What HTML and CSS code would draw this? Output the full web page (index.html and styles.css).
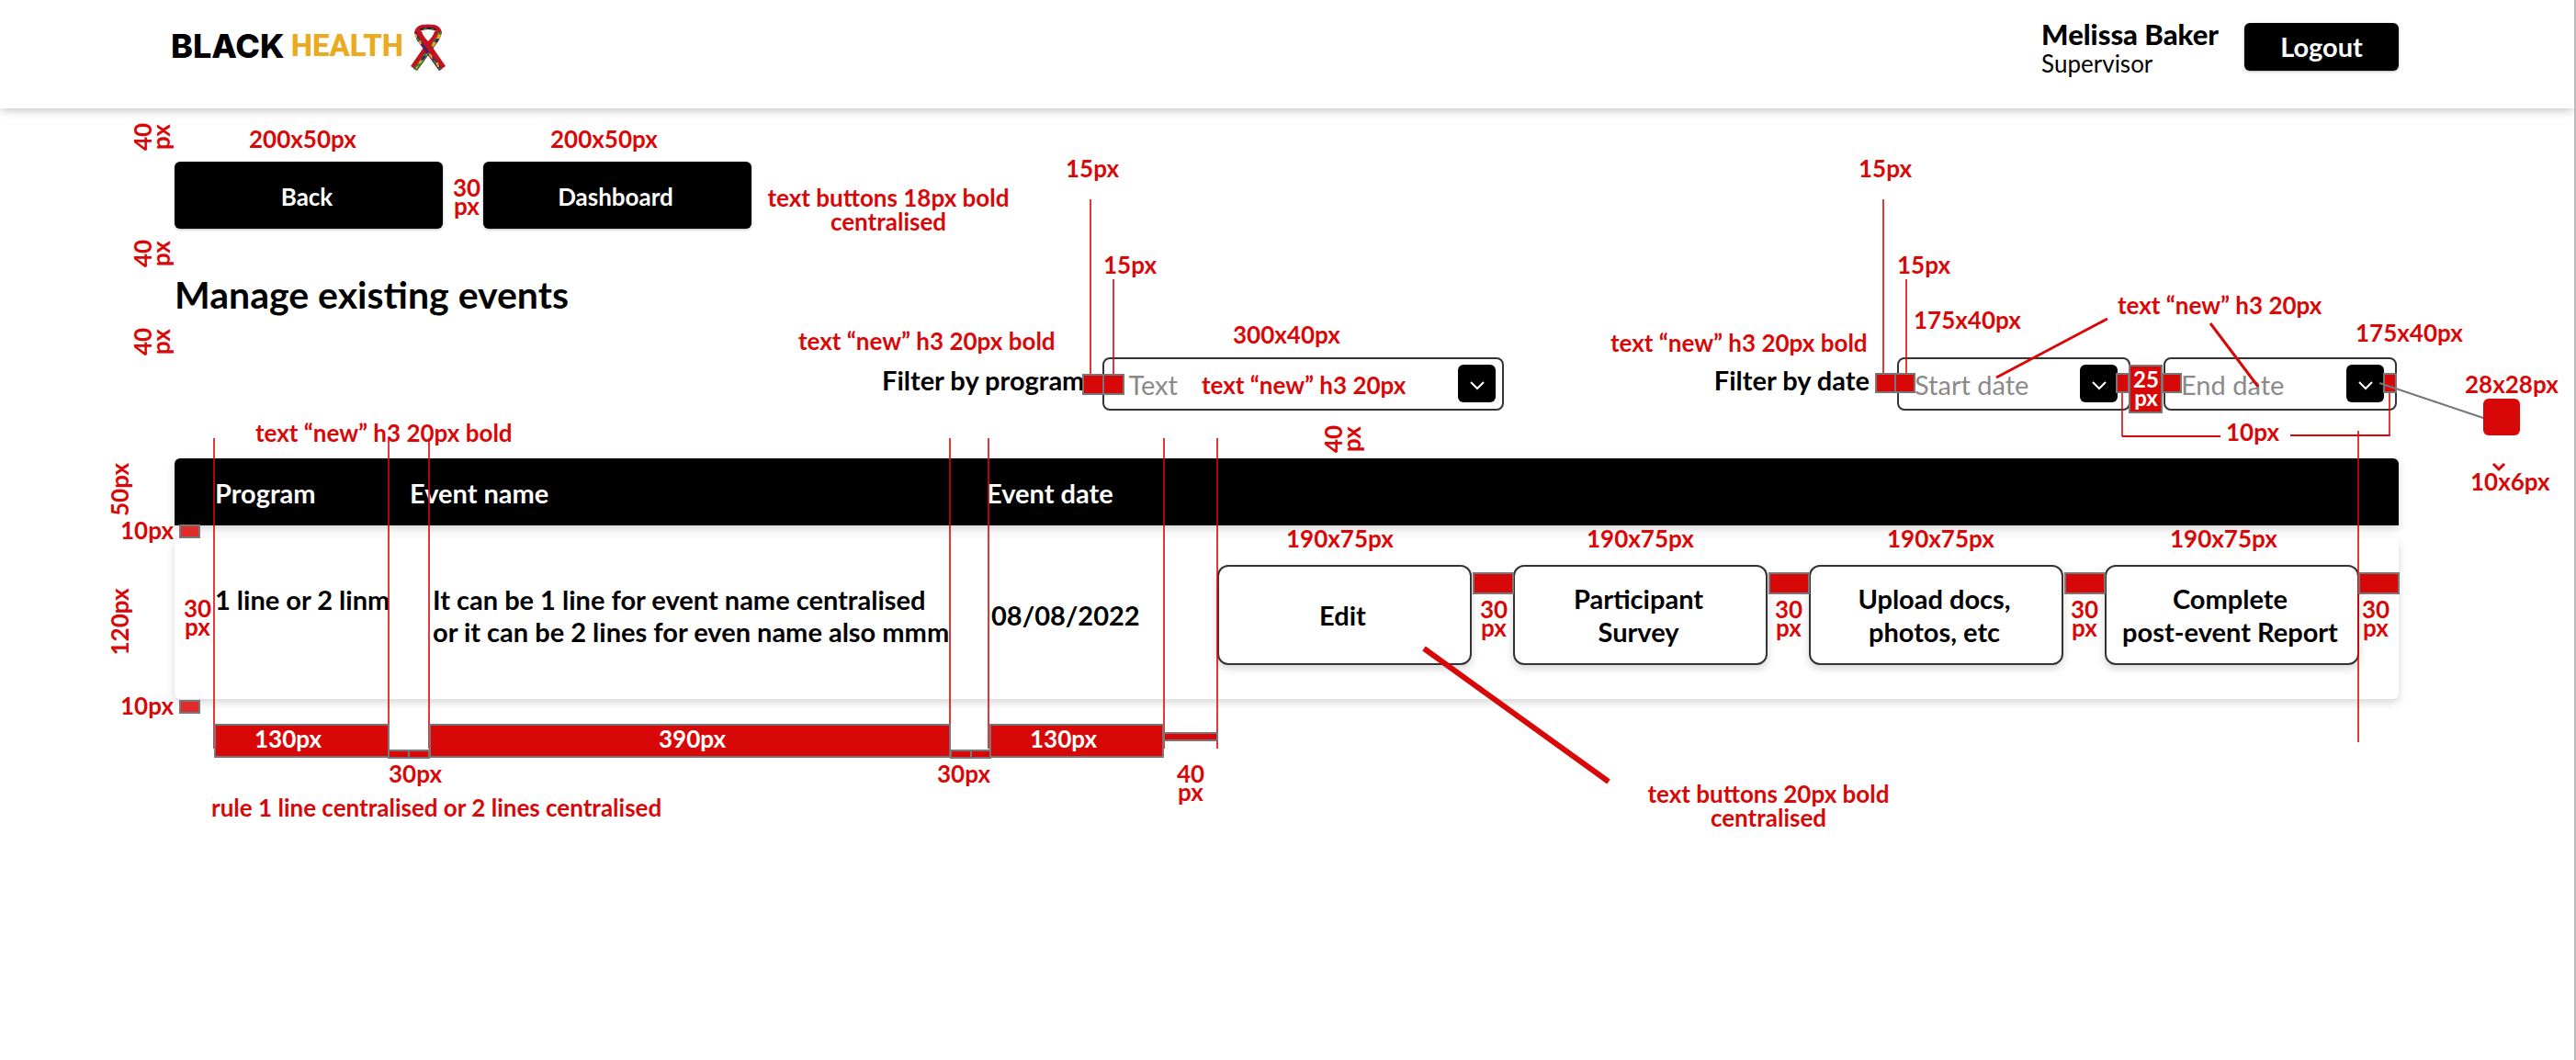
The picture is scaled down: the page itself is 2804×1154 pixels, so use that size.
FILE: index.html
```html
<!DOCTYPE html>
<html lang="en">
<head>
<meta charset="utf-8">
<meta name="viewport" content="width=device-width, initial-scale=1">
<title>Manage existing events</title>
<link rel="stylesheet" href="styles.css">
</head>
<body>
<div class="page">
  <header class="topbar">
    <a class="logo" href="#" aria-label="Black Health">
      <span class="logo-black">BLACK</span>
      <span class="logo-health">HEALTH</span>
      <svg class="ribbon" viewBox="0 0 40 51" aria-hidden="true">
        <path d="M27 8 L35 9 Q33 17 28 23 L8 51 L1 46 L19 20 Q26 13 27 8Z" fill="#c4121f"/>
        <path d="M31 8 L35 9 Q33 17 28 23 L8 51 L4 49 L24 21 Q30 14 31 8Z" fill="#2f7d3b"/>
        <path d="M31 11l3 1-1 4-4 0zM25 20l4-1-2 5-3 1zM19 31l3-3-2 5-3 2zM11 40l4-2-3 5-3 1zM7 47l3-2-3 5z" fill="#f0a51f"/>
        <path d="M29 16l3 1-2 3-3 0zM19 27l5-1-4 5-4 2zM14 35l4 0-3 4-3 1z" fill="#46206a"/>
        <path d="M13 8 L5 9 Q7 17 12 23 L32 51 L39 46 L21 20 Q14 13 13 8Z" fill="#c4121f"/>
        <path d="M8 9 L5 9 Q7 17 12 23 L32 51 L35 49 L15 22 Q9 15 8 9Z" fill="#46206a"/>
        <path d="M5 10l3 2 0 3-2 0zM9 18l3 0 1 4-2 0zM20 31l4 3 1 5-3-3zM28 42l3 0 1 5-2 0z" fill="#f0a51f"/>
        <path d="M7 15l3 1 1 3-3 0zM25 39l3 1 1 4-2 0zM31 47l3 1-2 3z" fill="#2f7d3b"/>
        <path d="M5 9 Q7 2 13 1 Q20 0 27 1 Q33 2 35 9 L29 9 Q28 6 20 6 Q12 6 11 9Z" fill="#c4121f"/>
        <path d="M11 5 Q20 2 29 5 L28 7 Q20 5 12 7Z" fill="#3b1430"/>
        <path d="M15 5l3-1 1 2-4 0zM23 5l3 0 0 2-3-1z" fill="#2f7d3b"/>
      </svg>
    </a>
    <div class="account">
      <div class="user">
        <strong class="user-name">Melissa Baker</strong>
        <span class="user-role">Supervisor</span>
      </div>
      <button class="btn btn-logout" type="button">Logout</button>
    </div>
  </header>

  <main class="content">
    <nav class="nav-buttons">
      <button class="btn" type="button">Back</button>
      <button class="btn" type="button">Dashboard</button>
    </nav>

    <h1 class="title">Manage existing events</h1>

    <form class="filters">
      <div class="filter filter-program">
        <label for="program">Filter by program</label>
        <div class="picker picker-wide">
          <select id="program"><option>Text</option></select>
          <span class="chevron"><svg viewBox="0 0 18 11"><path d="M2 2l7 7l7-7"/></svg></span>
        </div>
      </div>
      <div class="filter filter-date">
        <label for="start">Filter by date</label>
        <div class="dates">
          <div class="picker">
            <select id="start"><option>Start date</option></select>
            <span class="chevron"><svg viewBox="0 0 18 11"><path d="M2 2l7 7l7-7"/></svg></span>
          </div>
          <div class="picker">
            <select id="end" aria-label="End date"><option>End date</option></select>
            <span class="chevron"><svg viewBox="0 0 18 11"><path d="M2 2l7 7l7-7"/></svg></span>
          </div>
        </div>
      </div>
    </form>

    <table class="events">
      <thead>
        <tr><th>Program</th><th>Event name</th><th>Event date</th><th></th></tr>
      </thead>
      <tbody>
        <tr>
          <td class="cell-program"><div class="two-lines">1 line or 2 linm</div></td>
          <td class="cell-name">It can be 1 line for event name centralised<br>or it can be 2 lines for even name also mmm</td>
          <td class="cell-date">08/08/2022</td>
          <td class="cell-actions">
            <button class="action" type="button">Edit</button>
            <button class="action" type="button">Participant<br>Survey</button>
            <button class="action" type="button">Upload docs,<br>photos, etc</button>
            <button class="action" type="button">Complete<br>post-event Report</button>
          </td>
        </tr>
      </tbody>
    </table>
  </main>

  <svg class="specs specs-left" viewBox="0 0 1700 920">
    <g class="guide">
      <path d="M1187 217V408M1212 304V408"/>
      <path d="M233 477V815M423 477V815M467 477V815M1034 477V815M1076 477V815M1267 477V815M1325 477V815"/>
    </g>
    <g class="block">
      <rect x="1179" y="408" width="22" height="21"/><rect x="1201" y="408" width="22" height="21"/>
      <rect x="234" y="789" width="189" height="35"/>
      <rect x="423" y="817" width="22" height="8"/><rect x="445" y="817" width="22" height="8"/>
      <rect x="468" y="789" width="566" height="35"/>
      <rect x="1035" y="817" width="22" height="8"/><rect x="1057" y="817" width="21" height="8"/>
      <rect x="1078" y="789" width="188" height="35"/>
      <rect x="1267" y="798" width="58" height="8"/>
    </g>
    <g class="block soft">
      <rect x="196" y="572" width="21" height="13"/><rect x="196" y="763" width="21" height="13"/>
    </g>
    <g class="note">
      <text x="271" y="161">200x50px</text>
      <text x="599" y="161">200x50px</text>
      <text class="mid"><tspan x="508" y="214">30</tspan><tspan x="508" y="234">px</tspan></text>
      <text class="mid"><tspan x="967" y="225">text buttons 18px bold</tspan><tspan x="967" y="251">centralised</tspan></text>
      <text x="1160" y="193">15px</text>
      <text x="1201" y="298">15px</text>
      <text x="869" y="381">text “new” h3 20px bold</text>
      <text x="1342" y="374">300x40px</text>
      <text x="1308" y="429">text “new” h3 20px</text>
      <text class="mid" transform="translate(165 149) rotate(-90)"><tspan x="0" y="0">40</tspan><tspan x="0" y="20">px</tspan></text>
      <text class="mid" transform="translate(165 276) rotate(-90)"><tspan x="0" y="0">40</tspan><tspan x="0" y="20">px</tspan></text>
      <text class="mid" transform="translate(165 372) rotate(-90)"><tspan x="0" y="0">40</tspan><tspan x="0" y="20">px</tspan></text>
      <text class="mid" transform="translate(1461 478) rotate(-90)"><tspan x="0" y="0">40</tspan><tspan x="0" y="20">px</tspan></text>
      <text class="mid" transform="translate(140 533) rotate(-90)">50px</text>
      <text class="mid" transform="translate(140 677) rotate(-90)">120px</text>
      <text x="278" y="481">text “new” h3 20px bold</text>
      <text x="131" y="587">10px</text>
      <text x="131" y="778">10px</text>
      <text class="mid"><tspan x="215" y="672">30</tspan><tspan x="215" y="692">px</tspan></text>
      <text x="423" y="852">30px</text>
      <text x="1020" y="852">30px</text>
      <text class="mid"><tspan x="1296" y="852">40</tspan><tspan x="1296" y="872">px</tspan></text>
      <text x="230" y="889">rule 1 line centralised or 2 lines centralised</text>
    </g>
    <g class="note light">
      <text x="277" y="814">130px</text>
      <text x="717" y="814">390px</text>
      <text x="1121" y="814">130px</text>
    </g>
  </svg>

  <svg class="specs specs-right" viewBox="1300 0 1504 920">
    <g class="guide">
      <path d="M2050 217V408M2075 304V408M2567 469V808M2310 427V475M2601 427V475"/>
    </g>
    <g class="block">
      <rect x="2042" y="407" width="21" height="20"/><rect x="2063" y="407" width="21" height="20"/>
      <rect x="2304" y="407" width="13" height="20"/><rect x="2354" y="407" width="20" height="20"/>
      <rect x="2595" y="407" width="13" height="20"/>
      <rect x="2318" y="398" width="35" height="51"/>
      <rect x="1604" y="624" width="43" height="22"/><rect x="1926" y="624" width="43" height="22"/>
      <rect x="2248" y="624" width="43" height="22"/><rect x="2568" y="624" width="43" height="22"/>
    </g>
    <path class="bracket" d="M2310 475H2417M2493 474H2601"/>
    <path class="pointer" d="M2173 411L2294 347M2406 352L2458 421"/>
    <path class="pointer-thick" d="M1550 706L1751 851"/>
    <path class="pointer-grey" d="M2590 417L2709 457"/>
    <rect class="swatch" x="2703" y="434" width="40" height="40" rx="6"/>
    <path class="red-chevron" d="M2714 505l6 6l6-6"/>
    <g class="note">
      <text x="2023" y="193">15px</text>
      <text x="2065" y="298">15px</text>
      <text x="2083" y="358">175x40px</text>
      <text x="2305" y="342">text “new” h3 20px</text>
      <text x="2564" y="372">175x40px</text>
      <text x="1753" y="383">text “new” h3 20px bold</text>
      <text x="2683" y="428">28x28px</text>
      <text x="2423" y="480">10px</text>
      <text x="2689" y="534">10x6px</text>
      <text x="1400" y="596">190x75px</text>
      <text x="1727" y="596">190x75px</text>
      <text x="2054" y="596">190x75px</text>
      <text x="2362" y="596">190x75px</text>
      <text class="mid"><tspan x="1626" y="673">30</tspan><tspan x="1626" y="693">px</tspan></text>
      <text class="mid"><tspan x="1947" y="673">30</tspan><tspan x="1947" y="693">px</tspan></text>
      <text class="mid"><tspan x="2269" y="673">30</tspan><tspan x="2269" y="693">px</tspan></text>
      <text class="mid"><tspan x="2586" y="673">30</tspan><tspan x="2586" y="693">px</tspan></text>
      <text class="mid"><tspan x="1925" y="874">text buttons 20px bold</tspan><tspan x="1925" y="900">centralised</tspan></text>
    </g>
    <g class="note light small">
      <text class="mid"><tspan x="2336" y="422">25</tspan><tspan x="2336" y="442">px</tspan></text>
    </g>
  </svg>
</div>
</body>
</html>
```
FILE: styles.css
```css
:root {
  --red: #d90808;
  --ink: #000;
  --soft-shadow: 0 4px 10px rgba(0, 0, 0, .16);
}

* { box-sizing: border-box; }

body {
  margin: 0;
  background: #fff;
  color: var(--ink);
  font-family: Lato, "Open Sans", sans-serif;
  font-size: 29px;
  font-weight: 700;
}

button, select {
  font: inherit;
  color: inherit;
}

.page {
  position: relative;
  min-height: 100vh;
  border-right: 2px solid #b9b9b9;
  overflow: hidden;
}

/* Top bar */

.topbar {
  display: flex;
  justify-content: space-between;
  align-items: flex-start;
  height: 118px;
  padding: 22px 191px 0 186px;
  box-shadow: 0 2px 10px rgba(0, 0, 0, .24);
}

.logo {
  display: flex;
  align-items: flex-start;
  gap: 7px;
  padding-top: 4px;
  color: inherit;
  text-decoration: none;
}

.logo span { line-height: 48px; }

.logo-black {
  font-family: Inter, sans-serif;
  font-size: 36px;
  font-weight: 800;
}

.logo-health {
  color: #ebab20;
  font-family: Roboto, sans-serif;
  font-size: 33px;
  font-weight: 800;
}

.ribbon {
  width: 40px;
  height: 51px;
}

.account {
  display: flex;
  align-items: flex-start;
  gap: 28px;
}

.user {
  display: flex;
  flex-direction: column;
}

.user-name {
  font-size: 31px;
  line-height: 30px;
}

.user-role {
  font-size: 26px;
  font-weight: 400;
  line-height: 34px;
}

/* Buttons */

.btn {
  width: 292px;
  height: 73px;
  padding: 2px 4px 0 0;
  border: 0;
  border-radius: 6px;
  background: #000;
  color: #fff;
  font-size: 26px;
  box-shadow: 0 1px 3px rgba(0, 0, 0, .3);
}

.btn-logout {
  width: 168px;
  height: 52px;
  margin-top: 3px;
  padding: 0 0 2px;
  font-size: 29px;
}

.action {
  width: 277px;
  height: 109px;
  padding: 0 4px 0 0;
  border: 2px solid #333;
  border-radius: 12px;
  background: #fff;
  line-height: 36px;
  white-space: nowrap;
  box-shadow: var(--soft-shadow);
}

/* Page content */

.content { padding: 58px 191px 60px 190px; }

.nav-buttons {
  display: flex;
  gap: 44px;
}

.title {
  margin: 48px 0 44px;
  font-size: 41px;
  line-height: 48px;
}

.filters {
  display: flex;
  justify-content: space-between;
  margin-bottom: 52px;
}

.filter {
  display: flex;
  align-items: center;
  gap: 20px;
  white-space: nowrap;
}

.filter label { padding-bottom: 10px; }

.filter-program { margin-left: 770px; }

.filter-date {
  gap: 30px;
  padding-right: 2px;
}

.dates {
  display: flex;
  gap: 36px;
}

.picker {
  position: relative;
  width: 254px;
}

.picker select {
  display: block;
  width: 100%;
  height: 58px;
  padding: 0 60px 0 17px;
  border: 2px solid #333;
  border-radius: 8px;
  background: #fff;
  color: #8a8a8a;
  font-weight: 400;
  appearance: none;
}

.picker-wide { width: 437px; }

.picker-wide select { padding-left: 26px; }

.chevron {
  position: absolute;
  top: 8px;
  right: 14px;
  display: grid;
  place-items: center;
  width: 41px;
  height: 41px;
  border-radius: 6px;
  background: #000;
  pointer-events: none;
}

.picker-wide .chevron { right: 9px; }

.chevron svg {
  width: 18px;
  height: 11px;
  margin-top: 4px;
  fill: none;
  stroke: #fff;
  stroke-width: 2;
}

/* Events table */

.events,
.events thead,
.events tbody { display: block; }

.events tr {
  display: grid;
  grid-template-columns: 212px 628px 200px 1fr;
  align-items: center;
  padding-left: 44px;
}

.events th,
.events td {
  padding: 0;
  text-align: left;
  white-space: nowrap;
}

.events thead tr {
  height: 73px;
  padding-top: 2px;
  border-radius: 6px 6px 0 0;
  background: #000;
  color: #fff;
  box-shadow: var(--soft-shadow);
}

.events tbody tr {
  height: 175px;
  margin-top: 14px;
  padding-bottom: 8px;
  border-radius: 6px;
  background: #fff;
  line-height: 35px;
  box-shadow: var(--soft-shadow);
}

.two-lines { height: 70px; }

.events .cell-name { padding-left: 25px; }

.events .cell-date { padding-left: 5px; }

.events .cell-actions {
  display: flex;
  justify-content: flex-end;
  gap: 45px;
  padding-right: 43px;
}

/* Spec annotations drawn over the page */

.specs {
  position: absolute;
  top: 0;
  height: 920px;
  pointer-events: none;
}

.specs-left {
  left: 0;
  width: 1700px;
}

.specs-right {
  right: -2px;
  width: 1504px;
}

.note {
  fill: var(--red);
  font-size: 26px;
}

.light { fill: #fff; }

.small { font-size: 24px; }

.mid { text-anchor: middle; }

.guide {
  fill: none;
  stroke: var(--red);
  stroke-width: 2;
  opacity: .8;
}

.block {
  fill: var(--red);
  stroke: #777;
  stroke-width: 2;
}

.soft { fill: #e02b2b; }

.bracket {
  fill: none;
  stroke: var(--red);
  stroke-width: 2;
}

.pointer {
  fill: none;
  stroke: var(--red);
  stroke-width: 3;
}

.pointer-thick {
  fill: none;
  stroke: var(--red);
  stroke-width: 6;
}

.pointer-grey {
  fill: none;
  stroke: #777;
  stroke-width: 2;
}

.swatch { fill: var(--red); }

.red-chevron {
  fill: none;
  stroke: var(--red);
  stroke-width: 3;
}
```
